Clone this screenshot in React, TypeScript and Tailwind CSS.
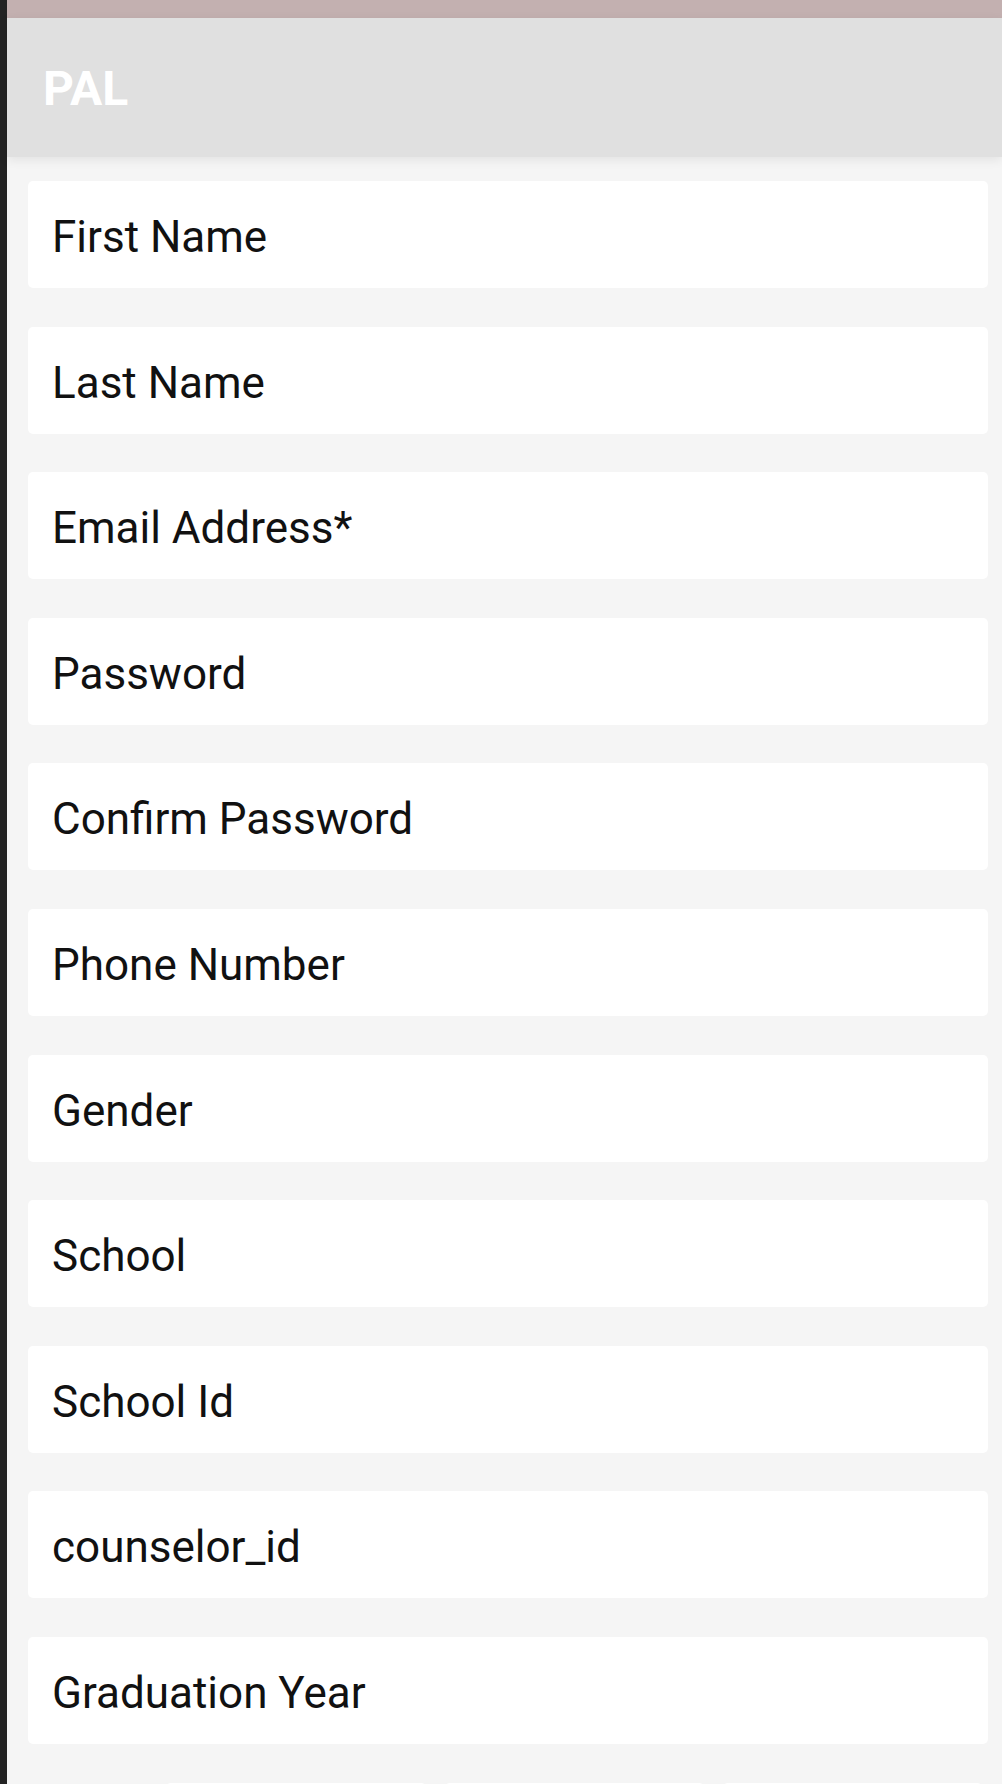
import React from "react";

const fields = [
  "First Name",
  "Last Name",
  "Email Address*",
  "Password",
  "Confirm Password",
  "Phone Number",
  "Gender",
  "School",
  "School Id",
  "counselor_id",
  "Graduation Year",
];

export default function App() {
  return (
    <div
      className="flex h-[1784px] w-[1002px] overflow-hidden bg-[#f5f5f5]"
      style={{ fontFamily: "Roboto, 'Noto Sans', sans-serif" }}
    >
      <div className="w-[7px] shrink-0 bg-[#232323]" />
      <div className="flex flex-1 flex-col">
        <div className="h-[18px] shrink-0 bg-[#c3b0b0]" />
        <header className="relative z-10 h-[139px] shrink-0 bg-[#e0e0e0] pl-[36px] pt-[47px] shadow-[0_3px_10px_rgba(0,0,0,0.08)]">
          <h1 className="text-[48px] font-bold leading-[48px] text-white">PAL</h1>
        </header>
        <main className="flex flex-col gap-[38.6px] pl-[21px] pr-[14px] pt-[24px]">
          {fields.map((f) => (
            <div
              key={f}
              className="h-[107px] rounded-[5px] bg-white pl-[24px] pt-[34px] text-[44px] leading-[44px] text-[#111111]"
            >
              {f}
            </div>
          ))}
          <div className="flex gap-[17px] pl-[137px]">
            <div className="h-[60px] w-[262px] rounded-[6px] bg-white" />
            <div className="h-[60px] w-[261px] rounded-[6px] bg-white" />
            <div className="h-[60px] w-[261px] rounded-[6px] bg-white" />
          </div>
        </main>
      </div>
    </div>
  );
}
